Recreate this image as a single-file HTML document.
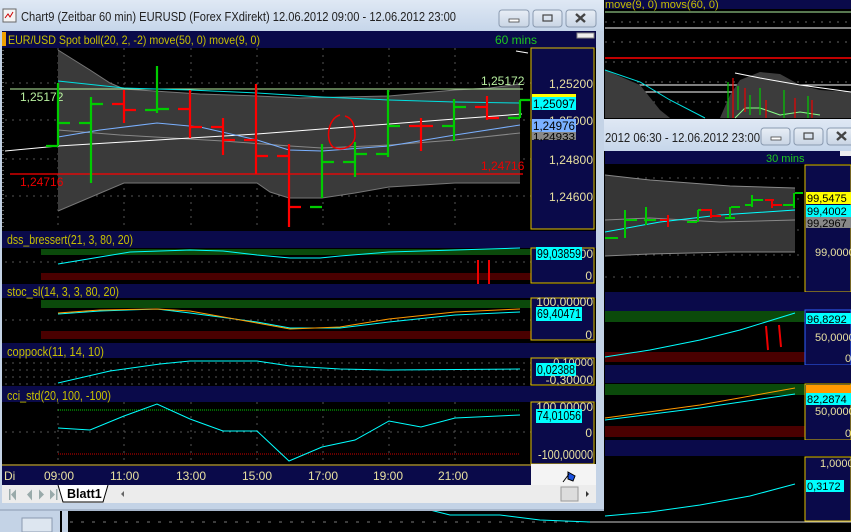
<!DOCTYPE html>
<html><head><meta charset="utf-8"><style>
html,body{margin:0;padding:0;background:#000;width:851px;height:532px;overflow:hidden}
svg{display:block}
text{font-family:"Liberation Sans",sans-serif}
</style></head><body>
<svg width="851" height="532" viewBox="0 0 851 532" xmlns="http://www.w3.org/2000/svg">
<defs>
<linearGradient id="tb" x1="0" y1="0" x2="0" y2="1"><stop offset="0" stop-color="#dfe8f4"/><stop offset="1" stop-color="#c6d6ea"/></linearGradient>
<linearGradient id="btn" x1="0" y1="0" x2="0" y2="1"><stop offset="0" stop-color="#e8eef6"/><stop offset="1" stop-color="#c9d5e4"/></linearGradient>
</defs>
<rect width="851" height="532" fill="#000"/>

<!-- ===== background right window (top part) ===== -->
<rect x="605" y="0" width="246" height="9" fill="#0a0a4a"/>
<text x="605" y="8" font-size="11" fill="#c8c000">move(9, 0) movs(60, 0)</text>
<g stroke="#666" stroke-dasharray="2,6">
<line x1="605" y1="22" x2="851" y2="22"/><line x1="605" y1="42" x2="851" y2="42"/><line x1="605" y1="62" x2="851" y2="62"/><line x1="605" y1="82" x2="851" y2="82"/><line x1="605" y1="102" x2="851" y2="102"/>
</g>
<line x1="605" y1="12" x2="851" y2="12" stroke="#b0f0a0"/>
<line x1="605" y1="28" x2="851" y2="28" stroke="#fff"/>
<line x1="605" y1="58" x2="851" y2="58" stroke="#f00" stroke-width="1.5"/>
<line x1="605" y1="85" x2="851" y2="85" stroke="#fff"/>
<line x1="605" y1="92" x2="851" y2="92" stroke="#fff"/>
<polygon points="605,70 640,85 660,110 670,118 720,118 730,95 740,80 760,72 780,74 800,85 820,90 851,92 851,118 605,118" fill="#3c3c3c"/>
<polyline points="605,70 640,82 670,100 705,118" fill="none" stroke="#00e0e0"/>
<polyline points="735,73 760,78 800,85 851,92" fill="none" stroke="#fff"/>
<polyline points="735,118 745,108 760,108 780,115 800,112 820,115" fill="none" stroke="#8f8"/>
<g stroke-width="1.2">
<line x1="728" y1="82" x2="728" y2="118" stroke="#0c0"/><line x1="733" y1="78" x2="733" y2="118" stroke="#e00"/><line x1="738" y1="86" x2="738" y2="110" stroke="#0c0"/><line x1="745" y1="88" x2="745" y2="112" stroke="#e00"/><line x1="750" y1="95" x2="750" y2="115" stroke="#0c0"/><line x1="760" y1="88" x2="760" y2="115" stroke="#0c0"/><line x1="766" y1="100" x2="766" y2="118" stroke="#e00"/><line x1="784" y1="90" x2="784" y2="118" stroke="#0c0"/><line x1="795" y1="98" x2="795" y2="118" stroke="#e00"/><line x1="808" y1="96" x2="808" y2="118" stroke="#0c0"/><line x1="812" y1="100" x2="812" y2="118" stroke="#e00"/>
</g>

<!-- ===== second window ===== -->
<rect x="595" y="119" width="256" height="32" fill="url(#tb)"/>
<text x="605" y="142" font-size="12.5" fill="#222" textLength="155" lengthAdjust="spacingAndGlyphs">2012 06:30 - 12.06.2012 23:00</text>
<g fill="url(#btn)" stroke="#8a9ab0">
<rect x="761" y="128" width="29" height="17" rx="3"/><rect x="794" y="128" width="29" height="17" rx="3"/><rect x="827" y="128" width="30" height="17" rx="3"/>
</g>
<rect x="771" y="137" width="10" height="3" fill="#fff" stroke="#444" stroke-width="0.8"/>
<rect x="804" y="133" width="9" height="6" fill="none" stroke="#444" stroke-width="1.2"/>
<path d="M837,132 l9,8 M846,132 l-9,8" stroke="#444" stroke-width="2.4"/>
<rect x="605" y="151" width="246" height="13" fill="#0a0a4a"/>
<text x="766" y="162" font-size="11" fill="#1ec81e">30 mins</text>
<rect x="840" y="151" width="11" height="5" fill="#eee"/>
<g stroke="#555" stroke-dasharray="2,6">
<line x1="605" y1="178" x2="805" y2="178"/><line x1="605" y1="199" x2="805" y2="199"/><line x1="605" y1="230" x2="805" y2="230"/><line x1="605" y1="255" x2="805" y2="255"/><line x1="605" y1="277" x2="805" y2="277"/>
</g>
<polygon points="605,175 650,180 730,186 795,188 795,252 730,252 650,254 605,256" fill="#363636"/>
<polyline points="605,175 650,180 730,186 795,188" fill="none" stroke="#888"/>
<polyline points="605,256 650,254 730,252 795,252" fill="none" stroke="#888"/>
<polyline points="605,220 650,218 720,222 795,220" fill="none" stroke="#888"/>
<polyline points="605,232 660,222 720,215 795,210" fill="none" stroke="#0ff"/>
<g stroke-width="2" fill="none">
<path d="M605,238h13M625,210v28M625,220h12M646,207v18M644,220h12" stroke="#0c0"/>
<path d="M660,220h9M668,215v12" stroke="#e00"/>
<path d="M687,222h10M698,210v12M698,210h9" stroke="#0c0"/>
<path d="M701,210h11M711,210v8M711,216h10" stroke="#e00"/>
<path d="M725,218h10M730,207v12M731,207h9M745,205h8M752,195v12M753,200h10" stroke="#0c0"/>
<path d="M765,200h9M772,200v8M772,205h10" stroke="#e00"/>
<path d="M783,205h12M794,193v15M795,193h8" stroke="#0c0"/>
</g>
<rect x="805" y="165" width="46" height="127" fill="#0a0a4a" stroke="#e0c000"/>
<rect x="806" y="192" width="45" height="12" fill="#ff0"/><text x="807" y="202" font-size="11" fill="#000">99,5475</text>
<rect x="806" y="205" width="45" height="12" fill="#0ff"/><text x="807" y="215" font-size="11" fill="#000">99,4002</text>
<rect x="806" y="217" width="45" height="11" fill="#888"/><text x="807" y="227" font-size="11" fill="#000">99,2967</text>
<text x="815" y="256" font-size="11" fill="#e8e0a0">99,0000</text>

<rect x="605" y="292" width="246" height="19" fill="#0a0a4a"/>
<rect x="605" y="311" width="200" height="11" fill="#0b4a0b"/><rect x="605" y="352" width="200" height="10" fill="#4a0000"/>
<polyline points="605,357 650,350 700,340 740,330 795,313" fill="none" stroke="#0ff"/>
<path d="M766,326 L768,350 M779,325 L781,347" stroke="#e00" stroke-width="2" fill="none"/>
<rect x="805" y="310" width="46" height="55" fill="#0a0a4a" stroke="#3060ff"/>
<rect x="806" y="313" width="45" height="11" fill="#0ff"/><text x="807" y="323" font-size="11" fill="#000">96,8292</text>
<text x="815" y="341" font-size="11" fill="#e8e0a0">50,0000</text><text x="845" y="362" font-size="11" fill="#e8e0a0">0</text>

<rect x="605" y="365" width="246" height="18" fill="#0a0a4a"/>
<rect x="605" y="384" width="200" height="11" fill="#0b4a0b"/><rect x="605" y="426" width="200" height="11" fill="#4a0000"/>
<polyline points="605,418 700,405 795,388" fill="none" stroke="#f90"/>
<polyline points="605,420 700,408 795,394" fill="none" stroke="#0ff"/>
<rect x="805" y="384" width="46" height="56" fill="#0a0a4a" stroke="#e0c000"/>
<rect x="806" y="385" width="45" height="8" fill="#f90"/>
<rect x="806" y="393" width="45" height="12" fill="#0ff"/><text x="807" y="403" font-size="11" fill="#000">82,2874</text>
<text x="815" y="415" font-size="11" fill="#e8e0a0">50,0000</text><text x="845" y="437" font-size="11" fill="#e8e0a0">0</text>

<rect x="605" y="440" width="246" height="16" fill="#0a0a4a"/>
<polyline points="605,516 650,512 700,505 750,496 795,484" fill="none" stroke="#0ff"/>
<rect x="805" y="457" width="46" height="64" fill="#0a0a4a" stroke="#e0c000"/>
<text x="820" y="467" font-size="11" fill="#e8e0a0">1,0000</text>
<rect x="806" y="480" width="38" height="12" fill="#0ff"/><text x="807" y="490" font-size="11" fill="#000">0,3172</text>
<line x1="590" y1="522" x2="851" y2="522" stroke="#ccc"/>

<!-- ===== bottom background strip ===== -->
<rect x="0" y="510" width="60" height="22" fill="#c4d3e6"/>
<rect x="22" y="518" width="30" height="14" fill="#dde6f0" stroke="#8a9ab0"/>
<rect x="62" y="511" width="6" height="21" fill="#c4d3e6"/>
<g stroke="#777" stroke-dasharray="3,8"><line x1="70" y1="522" x2="590" y2="522"/></g>
<polyline points="430,510 450,515 500,515 540,520 590,522" fill="none" stroke="#0ff"/>

<!-- ===== main window ===== -->
<rect x="0" y="0" width="604" height="511" fill="#c4d3e6"/>
<rect x="0" y="0" width="604" height="31" fill="url(#tb)"/>
<rect x="3" y="9" width="13" height="13" fill="#f4f4f4" stroke="#666"/>
<path d="M5,18 l3,-4 2,3 3,-5" stroke="#c00" fill="none"/>
<text x="21" y="21" font-size="12.5" fill="#222" textLength="435" lengthAdjust="spacingAndGlyphs">Chart9 (Zeitbar 60 min)  EURUSD (Forex FXdirekt) 12.06.2012 09:00 - 12.06.2012 23:00</text>
<g fill="url(#btn)" stroke="#8a9ab0">
<rect x="499" y="10" width="30" height="17" rx="3"/><rect x="533" y="10" width="29" height="17" rx="3"/><rect x="566" y="10" width="30" height="17" rx="3"/>
</g>
<rect x="509" y="19" width="10" height="3" fill="#fff" stroke="#444" stroke-width="0.8"/>
<rect x="543" y="15" width="9" height="6" fill="none" stroke="#444" stroke-width="1.2"/>
<path d="M576,14 l9,8 M585,14 l-9,8" stroke="#444" stroke-width="2.4"/>

<rect x="2" y="31" width="594" height="454" fill="#000"/>
<!-- header -->
<rect x="2" y="31" width="594" height="17" fill="#0a0a4a"/>
<rect x="2" y="32" width="4" height="14" fill="#f0a000"/>
<text x="8" y="44" font-size="12" fill="#c8c000" textLength="252" lengthAdjust="spacingAndGlyphs">EUR/USD Spot boll(20, 2, -2) move(50, 0) move(9, 0)</text>
<text x="495" y="44" font-size="12" fill="#1ec81e">60 mins</text>
<rect x="577" y="33" width="17" height="5" fill="#eee" stroke="#888"/>

<!-- main plot grid -->
<g stroke="#555" stroke-dasharray="2,5">
<line x1="5" y1="83" x2="531" y2="83"/><line x1="5" y1="120" x2="531" y2="120"/><line x1="5" y1="159" x2="531" y2="159"/><line x1="5" y1="196" x2="531" y2="196"/>
<line x1="58" y1="48" x2="58" y2="230"/><line x1="124" y1="48" x2="124" y2="230"/><line x1="191" y1="48" x2="191" y2="230"/><line x1="257" y1="48" x2="257" y2="230"/><line x1="323" y1="48" x2="323" y2="230"/><line x1="389" y1="48" x2="389" y2="230"/><line x1="455" y1="48" x2="455" y2="230"/>
</g>
<g stroke="#ccc" stroke-dasharray="1,3"><line x1="3" y1="50" x2="3" y2="230"/></g>
<polygon points="58,50 90,70 110,83 124,89 200,94 257,96 300,98 389,96 455,90 490,88 520,84 520,183 455,183 389,187 355,193 322,198 289,198 270,192 257,183 124,183 58,211" fill="#3a3a3a"/>
<polyline points="58,50 90,70 110,83 124,89 200,94 257,96 300,98 389,96 455,90 490,88 520,84" fill="none" stroke="#777"/>
<polyline points="58,211 124,183 257,183 270,192 289,198 322,198 355,193 389,187 455,183 520,183" fill="none" stroke="#777"/>
<polyline points="58,130 120,135 223,141 290,146 322,148 389,145 455,140 520,133" fill="none" stroke="#888"/>
<line x1="10" y1="89" x2="523" y2="89" stroke="#b8f0a0"/>
<line x1="10" y1="174" x2="523" y2="174" stroke="#f00" stroke-width="1.3"/>
<polyline points="58,81 124,88 190,90 257,93 322,97 389,100 455,102 520,103" fill="none" stroke="#00e0e0"/>
<polyline points="5,151 58,146 124,142 190,138 257,134 322,129 389,124 455,119 522,114" fill="none" stroke="#fff"/>
<polyline points="58,137 100,130 157,123 200,127 257,140 289,150 322,151 389,146 455,135 520,125" fill="none" stroke="#7ab0ff"/>
<line x1="516" y1="51" x2="528" y2="53" stroke="#fff"/>
<text x="20" y="101" font-size="12" fill="#b8f0a0">1,25172</text>
<text x="481" y="85" font-size="12" fill="#b8f0a0">1,25172</text>
<text x="20" y="186" font-size="12" fill="#e00">1,24716</text>
<text x="481" y="170" font-size="12" fill="#e00">1,24716</text>
<!-- bars -->
<g stroke-width="2.2" fill="none">
<path d="M58,83v63M46,146h12M58,123h12M91,97v86M79,123h12M91,104h12M157,66v47M145,110h12M157,109h12M322,144v54M310,207h12M322,162h12M355,142v35M343,162h12M355,154h12M388,90v67M376,154h12M388,126h12M454,99v42M442,126h12M454,107h12M520,100v18M508,118h12M520,100h10" stroke="#0c0"/>
<path d="M124,90v33M112,104h12M124,110h12M190,90v48M178,109h12M190,127h12M223,118v37M211,127h12M223,140h12M256,84v90M244,140h12M256,156h12M289,144v83M277,156h12M289,207h12M421,118v33M409,126h12M421,126h12M487,96v24M475,107h12M487,118h12" stroke="#f00"/>
</g>
<path d="M340,115 C328,118 325,140 333,147 C343,152 355,146 355,135 C355,125 352,118 345,116" fill="none" stroke="#e00" stroke-width="1.5"/>
<!-- price axis -->
<rect x="531" y="48" width="63" height="181" fill="#0a0a4a" stroke="#e0c000"/>
<g font-size="12" fill="#e8e0a0" text-anchor="end"><text x="593" y="88" textLength="44">1,25200</text><text x="593" y="125" textLength="44">1,25000</text><text x="593" y="164" textLength="44">1,24800</text><text x="593" y="201" textLength="44">1,24600</text></g>
<rect x="532" y="94" width="44" height="3" fill="#ff0"/>
<rect x="532" y="97" width="44" height="13" fill="#0ff"/><text x="533" y="108" font-size="12" fill="#000" textLength="42" lengthAdjust="spacingAndGlyphs">1,25097</text>
<rect x="532" y="119" width="44" height="13" fill="#7ab0ff"/><text x="533" y="130" font-size="12" fill="#000" textLength="42" lengthAdjust="spacingAndGlyphs">1,24976</text>
<rect x="532" y="132" width="44" height="8" fill="#888"/><text x="533" y="140" font-size="10" fill="#000" textLength="42" lengthAdjust="spacingAndGlyphs">1,24933</text>

<!-- dss -->
<rect x="2" y="231" width="594" height="17" fill="#0a0a4a"/>
<text x="7" y="244" font-size="12.5" fill="#c8c000" textLength="126" lengthAdjust="spacingAndGlyphs">dss_bressert(21, 3, 80, 20)</text>
<rect x="41" y="249" width="490" height="6" fill="#0b4a0b"/><rect x="41" y="273" width="490" height="7" fill="#4a0000"/>
<g stroke="#555" stroke-dasharray="2,5"><line x1="5" y1="262" x2="531" y2="262"/></g>
<polyline points="58,264 100,257 130,252 190,250 223,251 257,255 290,258 320,258 340,256 389,252 455,250 520,248" fill="none" stroke="#0ff"/>
<path d="M478,260v30M489,260v28" stroke="#e00" stroke-width="2"/>
<rect x="531" y="248" width="63" height="35" fill="#0a0a4a" stroke="#e0c000"/>
<text x="593" y="258" font-size="12" fill="#e8e0a0" text-anchor="end">100,00000</text>
<rect x="536" y="247" width="46" height="13" fill="#0ff"/><text x="537" y="258" font-size="12.5" fill="#000" textLength="44" lengthAdjust="spacingAndGlyphs">99,03859</text>
<text x="592" y="280" font-size="12" fill="#e8e0a0" text-anchor="end">0</text>

<!-- stoc -->
<rect x="2" y="284" width="594" height="14" fill="#0a0a4a"/>
<text x="7" y="296" font-size="12.5" fill="#c8c000" textLength="112" lengthAdjust="spacingAndGlyphs">stoc_sl(14, 3, 3, 80, 20)</text>
<rect x="41" y="300" width="490" height="8" fill="#0b4a0b"/><rect x="41" y="331" width="490" height="8" fill="#4a0000"/>
<g stroke="#555" stroke-dasharray="2,5"><line x1="5" y1="320" x2="531" y2="320"/></g>
<polyline points="58,314 100,311 157,309 190,313 257,322 290,328 340,328 389,322 455,315 520,312" fill="none" stroke="#0ff"/>
<polyline points="58,313 100,310 157,309 190,311 257,323 290,329 340,327 389,319 455,312 520,309" fill="none" stroke="#f90"/>
<rect x="531" y="298" width="63" height="42" fill="#0a0a4a" stroke="#e0c000"/>
<text x="593" y="306" font-size="12" fill="#e8e0a0" text-anchor="end">100,00000</text>
<rect x="536" y="307" width="46" height="14" fill="#0ff"/><text x="537" y="318" font-size="12.5" fill="#000" textLength="44" lengthAdjust="spacingAndGlyphs">69,40471</text>
<text x="592" y="339" font-size="12" fill="#e8e0a0" text-anchor="end">0</text>

<!-- coppock -->
<rect x="2" y="343" width="594" height="15" fill="#0a0a4a"/>
<text x="7" y="356" font-size="12.5" fill="#c8c000" textLength="97" lengthAdjust="spacingAndGlyphs">coppock(11, 14, 10)</text>
<g stroke="#555" stroke-dasharray="2,5"><line x1="5" y1="363" x2="531" y2="363"/><line x1="5" y1="370" x2="531" y2="370"/><line x1="5" y1="377" x2="531" y2="377"/><line x1="5" y1="384" x2="531" y2="384"/></g>
<polyline points="58,383 110,371 160,364 190,361 257,361 290,366 340,369 389,370 520,369" fill="none" stroke="#0ff"/>
<rect x="531" y="358" width="63" height="27" fill="#0a0a4a" stroke="#e0c000"/>
<text x="593" y="366" font-size="11" fill="#e8e0a0" text-anchor="end">0,10000</text>
<rect x="536" y="363" width="40" height="13" fill="#0ff"/><text x="537" y="374" font-size="12.5" fill="#000" textLength="38" lengthAdjust="spacingAndGlyphs">0,02388</text>
<text x="593" y="384" font-size="12" fill="#e8e0a0" text-anchor="end">-0,30000</text>

<!-- cci -->
<rect x="2" y="386" width="594" height="16" fill="#0a0a4a"/>
<text x="7" y="400" font-size="12.5" fill="#c8c000" textLength="104" lengthAdjust="spacingAndGlyphs">cci_std(20, 100, -100)</text>
<g stroke="#555" stroke-dasharray="2,5"><line x1="5" y1="432" x2="531" y2="432"/>
<line x1="58" y1="402" x2="58" y2="463"/><line x1="124" y1="402" x2="124" y2="463"/><line x1="191" y1="402" x2="191" y2="463"/><line x1="257" y1="402" x2="257" y2="463"/><line x1="323" y1="402" x2="323" y2="463"/><line x1="389" y1="402" x2="389" y2="463"/><line x1="455" y1="402" x2="455" y2="463"/></g>
<line x1="58" y1="410" x2="520" y2="410" stroke="#0c0" stroke-dasharray="1,1"/>
<line x1="58" y1="454" x2="520" y2="454" stroke="#c00" stroke-dasharray="1,1"/>
<polyline points="58,428 90,430 124,416 157,404 190,419 223,431 257,431 289,461 322,447 355,440 389,421 421,427 455,418 520,415" fill="none" stroke="#0ff"/>
<rect x="531" y="402" width="63" height="62" fill="#0a0a4a" stroke="#e0c000"/>
<text x="593" y="411" font-size="12" fill="#e8e0a0" text-anchor="end">100,00000</text>
<rect x="536" y="409" width="46" height="14" fill="#0ff"/><text x="537" y="420" font-size="12.5" fill="#000" textLength="44" lengthAdjust="spacingAndGlyphs">74,01056</text>
<text x="592" y="437" font-size="12" fill="#e8e0a0" text-anchor="end">0</text>
<text x="593" y="459" font-size="12.5" fill="#e8e0a0" text-anchor="end" textLength="55" lengthAdjust="spacingAndGlyphs">-100,00000</text>

<!-- time axis -->
<rect x="2" y="464" width="529" height="21" fill="#0a0a4a"/>
<line x1="2" y1="465" x2="531" y2="465" stroke="#e0c000"/>
<rect x="531" y="464" width="65" height="21" fill="#f4f4f4"/>
<path d="M563,482 l6,-8 M568,472 l7,4 -2,5 -5,-2z" stroke="#000" fill="#1a50e0"/>
<g font-size="12" fill="#e8e0a0"><text x="4" y="480">Di</text><text x="44" y="480">09:00</text><text x="110" y="480">11:00</text><text x="176" y="480">13:00</text><text x="242" y="480">15:00</text><text x="308" y="480">17:00</text><text x="373" y="480">19:00</text><text x="438" y="480">21:00</text></g>

<!-- tabs -->
<rect x="2" y="485" width="594" height="18" fill="#ececec"/>
<g fill="#9aa" stroke="none">
<path d="M9,489v11h1.5v-11zM11,494.5l5,-5v11z"/><path d="M27,494.5l5,-5v11z"/><path d="M39,489.5l5,5 -5,5z"/><path d="M50,489.5l5,5 -5,5zM56,489v11h1.5v-11z"/>
</g>
<path d="M58,485 l5,17 h40 l5,-17" fill="#fff" stroke="#000"/>
<text x="67" y="498" font-size="12.5" font-weight="bold" fill="#000">Blatt1</text>
<path d="M121,494 l3,-3v6z" fill="#666"/>
<rect x="561" y="487" width="17" height="14" fill="#ddd" stroke="#999"/>
<path d="M586,491 l3,3 -3,3z" fill="#333"/>
<line x1="0" y1="510" x2="604" y2="510" stroke="#8a9ab0"/>
</svg>
</body></html>
